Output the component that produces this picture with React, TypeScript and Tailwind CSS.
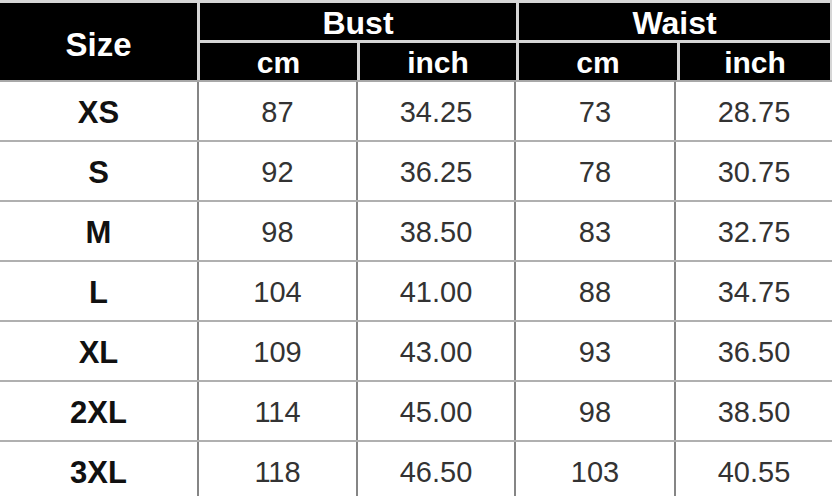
const rows = [
  ["XS", "87", "34.25", "73", "28.75"],
  ["S", "92", "36.25", "78", "30.75"],
  ["M", "98", "38.50", "83", "32.75"],
  ["L", "104", "41.00", "88", "34.75"],
  ["XL", "109", "43.00", "93", "36.50"],
  ["2XL", "114", "45.00", "98", "38.50"],
  ["3XL", "118", "46.50", "103", "40.55"],
];

const cols = "grid grid-cols-[197px_157px_156px_158px_1fr]";

export default function App() {
  return (
    <div
      className="w-[832px] h-[496px] overflow-hidden bg-white"
      style={{ fontFamily: '"Liberation Sans", Arial, sans-serif' }}
    >
      {/* header */}
      <div className={`${cols} grid-rows-[37px_37px] gap-[3px] bg-[#d6d6d6] pt-[3px] pr-[2px] text-white font-bold`}>
        <div className="row-span-2 bg-black flex items-center justify-center text-[33px] leading-none pt-[6px]">Size</div>
        <div className="col-span-2 bg-black flex items-center justify-center text-[32px] leading-none pt-[2px]">Bust</div>
        <div className="col-span-2 bg-black flex items-center justify-center text-[32px] leading-none pt-[2px]">Waist</div>
        <div className="bg-black flex items-center justify-center text-[30px] leading-none pt-[2px]">cm</div>
        <div className="bg-black flex items-center justify-center text-[30px] leading-none pt-[2px]">inch</div>
        <div className="bg-black flex items-center justify-center text-[30px] leading-none pt-[2px]">cm</div>
        <div className="bg-black flex items-center justify-center text-[30px] leading-none pt-[2px]">inch</div>
      </div>

      {/* body */}
      <div className="border-t-2 border-[#a8a8a8]">
        {rows.map((r) => (
          <div key={r[0]} className={`${cols} h-[60px] border-b-2 border-[#b0b0b0] gap-x-[2px] bg-[#858585]`}>
            <div className="bg-white flex items-center justify-center pt-[4px] text-[31px] font-bold text-[#111]">{r[0]}</div>
            {r.slice(1).map((v, i) => (
              <div key={i} className="bg-white flex items-center justify-center pt-[4px] text-[29px] text-[#333]">
                {v}
              </div>
            ))}
          </div>
        ))}
      </div>
    </div>
  );
}
